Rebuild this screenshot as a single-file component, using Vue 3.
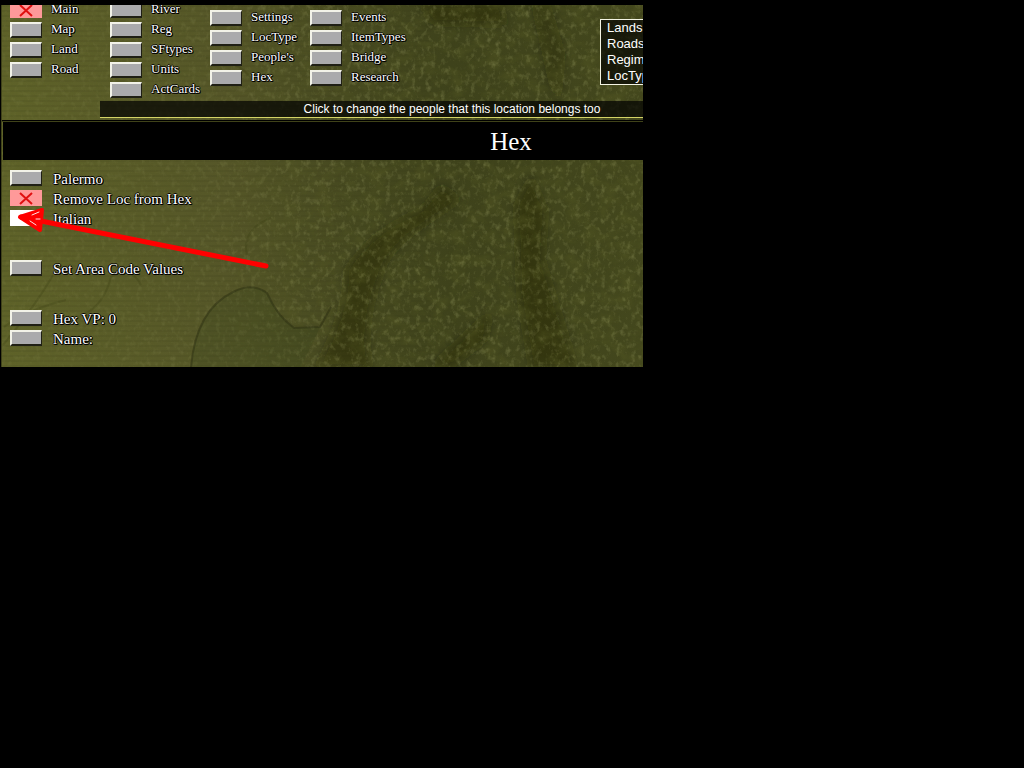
<script setup>
const menu = [
  [{ t: 'Main', kind: 'cross' }, { t: 'Map' }, { t: 'Land' }, { t: 'Road' }],
  [{ t: 'River' }, { t: 'Reg' }, { t: 'SFtypes' }, { t: 'Units' }, { t: 'ActCards' }],
  [{ t: 'Settings' }, { t: 'LocType' }, { t: "People's" }, { t: 'Hex' }],
  [{ t: 'Events' }, { t: 'ItemTypes' }, { t: 'Bridge' }, { t: 'Research' }]
]
const stats = ['Lands', 'Roads', 'Regimes', 'LocTypes']
const groups = [
  [{ t: 'Palermo' }, { t: 'Remove Loc from Hex', kind: 'cross' }, { t: 'Italian', kind: 'lit' }],
  [{ t: 'Set Area Code Values' }],
  [{ t: 'Hex VP: 0' }, { t: 'Name:' }]
]
</script>

<template>
  <main class="screen">
    <div class="viewer">
      <svg class="terrain" viewBox="0 0 642 362" preserveAspectRatio="none" aria-hidden="true">
        <defs>
          <linearGradient id="base" x1="0" y1="0" x2="1" y2="0">
            <stop offset="0" stop-color="#5f6329" />
            <stop offset=".35" stop-color="#555628" />
            <stop offset=".52" stop-color="#474a20" />
            <stop offset=".7" stop-color="#3e421b" />
            <stop offset="1" stop-color="#43471d" />
          </linearGradient>
          <linearGradient id="fade" x1="0" y1="0" x2="1" y2="0">
            <stop offset="0" stop-color="#fff" stop-opacity=".35" />
            <stop offset=".3" stop-color="#fff" stop-opacity=".5" />
            <stop offset=".55" stop-color="#fff" />
            <stop offset="1" stop-color="#fff" />
          </linearGradient>
          <pattern id="lines" width="8" height="5" patternUnits="userSpaceOnUse">
            <path d="M0 1h8" stroke="#2f3010" stroke-opacity=".2" />
          </pattern>
          <filter id="dark" x="0" y="0" width="100%" height="100%">
            <feTurbulence type="fractalNoise" baseFrequency=".06 .08" numOctaves="5" seed="7" />
            <feColorMatrix values="0 0 0 0 .1  0 0 0 0 .11  0 0 0 0 .02  2.6 0 0 0 -1.05" />
          </filter>
          <filter id="light" x="0" y="0" width="100%" height="100%">
            <feTurbulence type="fractalNoise" baseFrequency=".2 .16" numOctaves="3" seed="21" />
            <feColorMatrix values="0 0 0 0 .48  0 0 0 0 .5  0 0 0 0 .2  0 2.6 0 0 -1.3" />
          </filter>
          <filter id="soft"><feGaussianBlur stdDeviation="5" /></filter>
          <mask id="right"><rect width="642" height="362" fill="url(#fade)" /></mask>
        </defs>
        <rect width="642" height="362" fill="url(#base)" />
        <rect width="430" height="362" fill="url(#lines)" />
        <g filter="url(#soft)" fill="#1f220c" fill-opacity=".45">
          <path d="M315 362Q345 310 345 265Q370 225 420 205L440 180L460 195L430 215Q385 245 380 270Q360 320 370 362Z" />
          <path d="M515 200L530 170L545 205L542 255L575 362H530L518 290Z" />
          <path d="M430 362L490 305L485 335L450 362Z" />
          <path d="M420 0H500L505 20L430 18Z" />
          <path d="M530 0H550L565 50L560 100L548 80Z" fill-opacity=".3" />
        </g>
        <g mask="url(#right)">
          <rect width="642" height="362" filter="url(#dark)" opacity=".35" />
          <rect width="642" height="362" filter="url(#light)" opacity=".25" />
        </g>
        <path d="M190 362Q195 305 232 287Q251 277 266 288Q276 311 293 323L319 322L330 302" fill="none" stroke="#272b10" stroke-opacity=".45" stroke-width="2" />
        <path d="M190 362Q195 305 232 287Q251 277 266 288Q276 311 293 323L319 322L300 362Z" fill="#344019" fill-opacity=".2" />
        <path d="M2 340Q35 300 52 270M82 310Q103 300 110 272Q130 260 140 280M3 322Q25 305 65 295M205 53Q237 55 250 73M246 250Q240 225 270 213" fill="none" stroke="#30350f" stroke-opacity=".22" stroke-width="2" />
      </svg>

      <div class="stage">
        <header class="top">
          <nav class="menu" aria-label="Editor sections">
            <div v-for="(col, i) in menu" :key="i" class="column">
              <button v-for="b in col" :key="b.t" type="button" class="action small">
                <span class="key" :class="b.kind">
                  <svg v-if="b.kind === 'cross'" viewBox="0 0 32 16" aria-hidden="true"><path d="M10 3L22 14M22 3L10 14" /></svg>
                </span>
                <span class="label">{{ b.t }}</span>
              </button>
            </div>
            <ul class="stats">
              <li v-for="s in stats" :key="s">{{ s }}</li>
            </ul>
          </nav>
          <p class="hint">Click to change the people that this location belongs too</p>
        </header>

        <section class="panel">
          <h1>Hex</h1>
          <div class="groups">
            <div v-for="(g, i) in groups" :key="i" class="group">
              <button v-for="b in g" :key="b.t" type="button" class="action">
                <span class="key" :class="b.kind">
                  <svg v-if="b.kind === 'cross'" viewBox="0 0 32 16" aria-hidden="true"><path d="M10 3L22 14M22 3L10 14" /></svg>
                </span>
                <span class="label">{{ b.t }}</span>
              </button>
            </div>
          </div>
        </section>
      </div>

      <svg class="arrow" viewBox="0 0 256 64" aria-hidden="true">
        <path d="M251 55L6 6" stroke-width="5" />
        <path d="M5 6L27 -1L25 19Z" fill="#f00" stroke-width="4" />
        <path d="M17 4L24 1M21 8L25 8M15 10L21 14" stroke="#ffe4e4" stroke-width="1" />
      </svg>
    </div>
  </main>
</template>

<style>
html,
body {
  margin: 0;
  background: #000;
}
</style>

<style scoped>
.screen {
  display: grid;
  grid-template-columns: 643fr 381fr;
  min-height: 100vh;
  align-items: start;
  background: #000;
  color: #fff;
  font-family: "Liberation Serif", "Times New Roman", serif;
}
.viewer {
  position: relative;
  overflow: hidden;
  margin: 5px 0 0 1px;
  min-width: 0;
}
.terrain {
  position: absolute;
  inset: 0;
  width: 100%;
  height: 100%;
}
.stage {
  position: relative;
  width: 100vw;
  border-left: 1px solid #3f4219;
  box-sizing: border-box;
}
.top {
  border-bottom: 1px solid #000;
  padding-bottom: 2px;
}
.menu {
  display: flex;
  height: 96px;
  padding-left: 8px;
}
.column {
  width: 100px;
  margin-top: -5px;
}
.column:nth-child(n + 3) {
  margin-top: 3px;
}
.action {
  display: flex;
  align-items: center;
  gap: 11px;
  height: 20px;
  padding: 0;
  border: 0;
  background: none;
  color: #fff;
  font: 15px/20px "Liberation Serif", "Times New Roman", serif;
  text-shadow: 1px 0 #000, -1px 0 #000, 0 1px #000, 0 -1px #000, 1px 1px #000;
  white-space: nowrap;
  cursor: pointer;
}
.label {
  padding-top: 2px;
}
.small {
  gap: 9px;
  font-size: 13px;
}
.small .label {
  line-height: 16px;
  padding: 0 0 2px;
}
.key {
  box-sizing: border-box;
  width: 32px;
  height: 16px;
  background: #aaaaac;
  border: 2px solid;
  border-color: #f2f2e8 #202015 #202015 #f2f2e8;
  border-right-width: 1px;
}
.key.cross {
  border: 0;
  background: #ff9999;
}
.key.lit {
  border: 0;
  background: #fff;
}
.key svg {
  display: block;
  width: 32px;
  height: 16px;
  fill: none;
  stroke: #e01010;
  stroke-width: 2;
}
.stats {
  align-self: flex-start;
  margin: 14px 0 0 190px;
  padding: 0 6px;
  width: 190px;
  border: 1px solid #f4f4e4;
  background: rgba(0, 0, 0, .65);
  list-style: none;
  font: 13px/16px "Liberation Sans", Arial, sans-serif;
}
.hint {
  margin: 0 221px 0 98px;
  padding-top: 1px;
  border-bottom: 1px solid #d4d466;
  background: rgba(0, 0, 0, .7);
  font: 12px/15px "Liberation Sans", Arial, sans-serif;
  text-align: center;
}
.panel {
  border-top: 1px solid #3f4219;
}
.panel h1 {
  margin: 0 0 0 1px;
  padding: 1px 6px 0 0;
  background: #000;
  font-size: 25px;
  font-weight: 400;
  line-height: 37px;
  text-align: center;
}
.groups {
  display: flex;
  flex-direction: column;
  gap: 30px;
  padding: 8px 8px 19px;
}
.arrow {
  position: absolute;
  left: 14px;
  top: 206px;
  width: 256px;
  height: 64px;
  overflow: visible;
  fill: none;
  stroke: #f00;
  stroke-linecap: round;
  stroke-linejoin: round;
  pointer-events: none;
}
</style>
